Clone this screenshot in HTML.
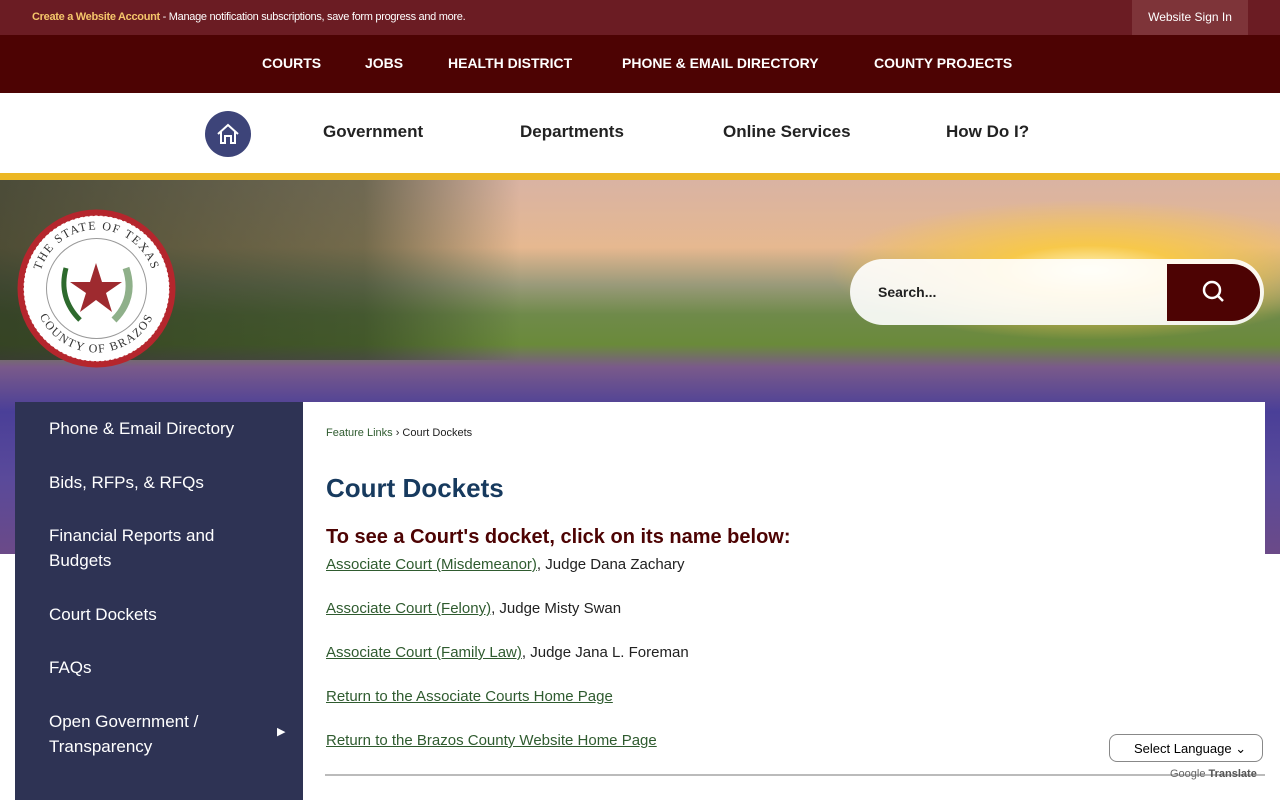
<!DOCTYPE html>
<html><head><style>
body{margin:0;width:1280px;height:800px;overflow:hidden;font-family:"Liberation Sans",sans-serif;position:relative;background:#fff}
.top{position:absolute;top:0;left:0;width:1280px;height:35px;background:#6b1c23}
.top .msg{position:absolute;left:32px;top:11px;font-size:11px;color:#fff;letter-spacing:-.3px}
.top .msg b{color:#f5c66b}
.top .sign{position:absolute;left:1132px;top:0;width:116px;height:35px;background:#7e3439;color:#fff;font-size:12px;line-height:35px;text-align:center}
.nav1{position:absolute;top:35px;left:0;width:1280px;height:58px;background:#4d0303}
.nav1 span{position:absolute;top:20px;color:#fff;font-weight:bold;font-size:14px}
.nav2{position:absolute;top:93px;left:0;width:1280px;height:80px;background:#fff}
.nav2 span{position:absolute;top:29px;color:#222;font-weight:bold;font-size:17px}
.home{position:absolute;left:205px;top:111px;width:46px;height:46px;border-radius:50%;background:#3d4479}
.gold{position:absolute;top:173px;left:0;width:1280px;height:7px;background:#ecb724}
.hero{position:absolute;top:180px;left:0;width:1280px;height:374px;background:
radial-gradient(ellipse 260px 70px at 1090px 90px,#fff6c0 0%,#f7c84a 35%,rgba(240,170,80,0) 100%),
linear-gradient(180deg,#d9b3a3 0%,#e6b890 18%,#9a9a7a 28%,#6f8a4a 36%,#6a8a3a 44%,#7a5a8a 50%,#4a3f98 62%,#5a4a9a 80%,#6b4a88 100%)}
.trees{position:absolute;top:180px;left:0;width:520px;height:180px;background:linear-gradient(90deg,rgba(40,50,30,.8),rgba(40,55,30,.6) 70%,rgba(40,55,30,0))}
.search{position:absolute;left:850px;top:259px;width:414px;height:66px;border-radius:33px;background:rgba(255,255,255,.9)}
.search span{position:absolute;left:28px;top:25px;font-size:14px;font-weight:bold;color:#222}
.sbtn{position:absolute;left:1167px;top:264px;width:93px;height:57px;border-radius:0 28px 28px 0;background:#4d0303}
.side{position:absolute;left:15px;top:402px;width:288px;height:398px;background:#2e3354}
.side div{position:absolute;left:34px;color:#fff;font-size:17px;line-height:25px}
.main{position:absolute;left:303px;top:402px;width:962px;height:398px;background:#fff}
a{color:#2f5b2f;text-decoration:underline}
.c{position:absolute;left:326px;font-size:15px;color:#222}
</style></head><body>
<div class="top"><div class="msg"><b>Create a Website Account</b> - Manage notification subscriptions, save form progress and more.</div><div class="sign">Website Sign In</div></div>
<div class="nav1"><span style="left:262px">COURTS</span><span style="left:365px">JOBS</span><span style="left:448px">HEALTH DISTRICT</span><span style="left:622px">PHONE &amp; EMAIL DIRECTORY</span><span style="left:874px">COUNTY PROJECTS</span></div>
<div class="nav2"><span style="left:323px">Government</span><span style="left:520px">Departments</span><span style="left:723px">Online Services</span><span style="left:946px">How Do I?</span></div>
<div class="home"><svg width="46" height="46" viewBox="0 0 46 46"><path d="M13 23 L23 14 L33 23 M16 21 V32 H20 V25 H26 V32 H30 V21" fill="none" stroke="#fff" stroke-width="2"/></svg></div>
<div class="gold"></div>
<div class="hero"></div>
<div class="trees"></div>
<svg style="position:absolute;left:16px;top:208px" width="161" height="161" viewBox="0 0 161 161"><defs><path id="t" d="M22 80 A58.5 58.5 0 0 1 139 80"/><path id="b" d="M18 82 A62.5 62.5 0 0 0 143 82"/></defs><circle cx="80.5" cy="80.5" r="79" fill="#b5262d"/><circle cx="80.5" cy="80.5" r="73" fill="#fff" stroke="#b5262d" stroke-width="1" stroke-dasharray="2 3"/><circle cx="80.5" cy="80.5" r="50" fill="#fff" stroke="#999"/><polygon points="80,55 86,74 106,74 90,85 96,104 80,92 64,104 70,85 54,74 74,74" fill="#9e2a2f"/><path d="M50 60 Q42 90 64 112" stroke="#2d6a2d" stroke-width="5" fill="none"/><path d="M110 60 Q120 90 98 112" stroke="#8fb08a" stroke-width="7" fill="none"/><text font-size="12" font-family="Liberation Serif" fill="#333" letter-spacing="1.5"><textPath href="#t" startOffset="50%" text-anchor="middle">THE STATE OF TEXAS</textPath></text><text font-size="12" font-family="Liberation Serif" fill="#333" letter-spacing="1.5"><textPath href="#b" startOffset="50%" text-anchor="middle" side="right">COUNTY OF BRAZOS</textPath></text></svg>
<div class="search"><span>Search...</span></div>
<div class="sbtn"><svg width="93" height="57"><circle cx="45" cy="26" r="8" stroke="#fff" stroke-width="2.5" fill="none"/><line x1="51" y1="32" x2="56" y2="37" stroke="#fff" stroke-width="2.5"/></svg></div>
<div class="side">
<div style="top:14px">Phone &amp; Email Directory</div>
<div style="top:68px">Bids, RFPs, &amp; RFQs</div>
<div style="top:121px">Financial Reports and<br>Budgets</div>
<div style="top:200px">Court Dockets</div>
<div style="top:253px">FAQs</div>
<div style="top:307px">Open Government /<br>Transparency</div>
<div style="top:318px;left:262px;font-size:11px">▶</div>
</div>
<div class="main"></div>
<div class="c" style="top:427px;font-size:11px"><span style="color:#2f5b2f">Feature Links</span> › Court Dockets</div>
<div class="c" style="top:473px;font-size:26px;font-weight:bold;color:#173a5e">Court Dockets</div>
<div class="c" style="top:526px;font-size:20px;font-weight:bold;color:#4d0303">To see a Court's docket, click on its name below:</div>
<div class="c" style="top:556px"><a>Associate Court (Misdemeanor)</a>, Judge Dana Zachary</div>
<div class="c" style="top:600px"><a>Associate Court (Felony)</a>, Judge Misty Swan</div>
<div class="c" style="top:644px"><a>Associate Court (Family Law)</a>, Judge Jana L. Foreman</div>
<div class="c" style="top:688px"><a>Return to the Associate Courts Home Page</a></div>
<div class="c" style="top:732px"><a>Return to the Brazos County Website Home Page</a></div>
<div style="position:absolute;left:325px;top:774px;width:940px;height:2px;background:#bbb"></div>
<div style="position:absolute;left:1109px;top:734px;width:154px;height:28px;border:1px solid #888;border-radius:8px;background:#fff;font-size:13px;line-height:28px;box-sizing:border-box;padding-left:24px">Select Language ⌄</div>
<div style="position:absolute;left:1170px;top:768px;font-size:11px;color:#666">Google <b style="color:#555">Translate</b></div>
</body></html>
